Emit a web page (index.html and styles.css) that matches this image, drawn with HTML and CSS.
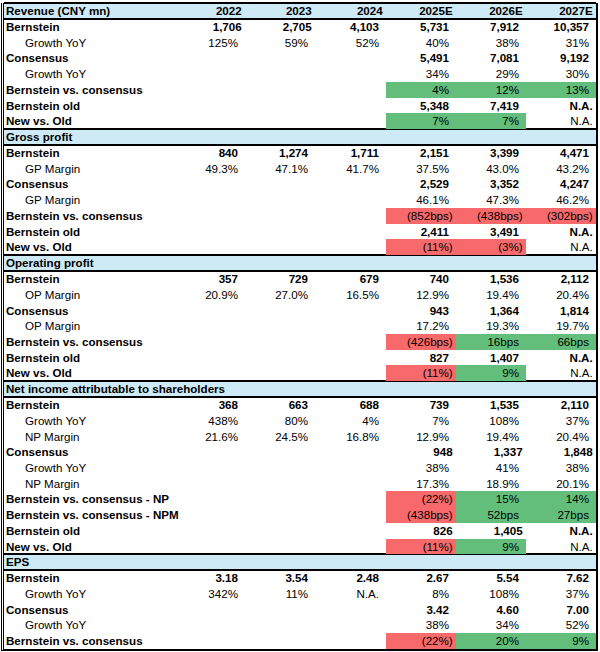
FILE: index.html
```html
<!DOCTYPE html>
<html>
<head>
<meta charset="utf-8">
<link rel="stylesheet" href="styles.css">
</head>
<body>
<div class="sheet">
  <div class="row hd"><div class="lbl b">Revenue (CNY mn)</div><div class="b">2022</div><div class="b">2023</div><div class="b">2024</div><div class="b">2025E</div><div class="b">2026E</div><div class="b">2027E</div></div>
  <div class="row"><div class="lbl b">Bernstein</div><div class="b">1,706</div><div class="b">2,705</div><div class="b p">4,103</div><div class="b p">5,731</div><div class="b p">7,912</div><div class="b p">10,357</div></div>
  <div class="row"><div class="lbl sub">Growth YoY</div><div class="p">125%</div><div class="p">59%</div><div class="p">52%</div><div class="p">40%</div><div class="p">38%</div><div class="p">31%</div></div>
  <div class="row"><div class="lbl b">Consensus</div><div></div><div></div><div></div><div class="b p">5,491</div><div class="b p">7,081</div><div class="b p">9,192</div></div>
  <div class="row"><div class="lbl sub">Growth YoY</div><div></div><div></div><div></div><div class="p">34%</div><div class="p">29%</div><div class="p">30%</div></div>
  <div class="row"><div class="lbl b">Bernstein vs. consensus</div><div></div><div></div><div></div><div class="p g">4%</div><div class="p g">12%</div><div class="p g">13%</div></div>
  <div class="row"><div class="lbl b">Bernstein old</div><div></div><div></div><div></div><div class="b p">5,348</div><div class="b p">7,419</div><div class="b">N.A.</div></div>
  <div class="row"><div class="lbl b">New vs. Old</div><div></div><div></div><div></div><div class="p g">7%</div><div class="p g">7%</div><div>N.A.</div></div>

  <div class="row hd"><div class="lbl b">Gross profit</div><div></div><div></div><div></div><div></div><div></div><div></div></div>
  <div class="row"><div class="lbl b">Bernstein</div><div class="b p">840</div><div class="b p">1,274</div><div class="b p">1,711</div><div class="b p">2,151</div><div class="b p">3,399</div><div class="b p">4,471</div></div>
  <div class="row"><div class="lbl sub">GP Margin</div><div class="p">49.3%</div><div class="p">47.1%</div><div class="p">41.7%</div><div class="p">37.5%</div><div class="p">43.0%</div><div class="p">43.2%</div></div>
  <div class="row"><div class="lbl b">Consensus</div><div></div><div></div><div></div><div class="b p">2,529</div><div class="b p">3,352</div><div class="b p">4,247</div></div>
  <div class="row"><div class="lbl sub">GP Margin</div><div></div><div></div><div></div><div class="p">46.1%</div><div class="p">47.3%</div><div class="p">46.2%</div></div>
  <div class="row"><div class="lbl b">Bernstein vs. consensus</div><div></div><div></div><div></div><div class="r">(852bps)</div><div class="r">(438bps)</div><div class="r">(302bps)</div></div>
  <div class="row"><div class="lbl b">Bernstein old</div><div></div><div></div><div></div><div class="b p">2,411</div><div class="b p">3,491</div><div class="b">N.A.</div></div>
  <div class="row"><div class="lbl b">New vs. Old</div><div></div><div></div><div></div><div class="r">(11%)</div><div class="r">(3%)</div><div>N.A.</div></div>

  <div class="row hd"><div class="lbl b">Operating profit</div><div></div><div></div><div></div><div></div><div></div><div></div></div>
  <div class="row"><div class="lbl b">Bernstein</div><div class="b p">357</div><div class="b p">729</div><div class="b p">679</div><div class="b p">740</div><div class="b p">1,536</div><div class="b p">2,112</div></div>
  <div class="row"><div class="lbl sub">OP Margin</div><div class="p">20.9%</div><div class="p">27.0%</div><div class="p">16.5%</div><div class="p">12.9%</div><div class="p">19.4%</div><div class="p">20.4%</div></div>
  <div class="row"><div class="lbl b">Consensus</div><div></div><div></div><div></div><div class="b p">943</div><div class="b p">1,364</div><div class="b p">1,814</div></div>
  <div class="row"><div class="lbl sub">OP Margin</div><div></div><div></div><div></div><div class="p">17.2%</div><div class="p">19.3%</div><div class="p">19.7%</div></div>
  <div class="row"><div class="lbl b">Bernstein vs. consensus</div><div></div><div></div><div></div><div class="r">(426bps)</div><div class="p g">16bps</div><div class="p g">66bps</div></div>
  <div class="row"><div class="lbl b">Bernstein old</div><div></div><div></div><div></div><div class="b p">827</div><div class="b p">1,407</div><div class="b">N.A.</div></div>
  <div class="row"><div class="lbl b">New vs. Old</div><div></div><div></div><div></div><div class="r">(11%)</div><div class="p g">9%</div><div>N.A.</div></div>

  <div class="row hd"><div class="lbl b">Net income attributable to shareholders</div><div></div><div></div><div></div><div></div><div></div><div></div></div>
  <div class="row"><div class="lbl b">Bernstein</div><div class="b p">368</div><div class="b p">663</div><div class="b p">688</div><div class="b p">739</div><div class="b p">1,535</div><div class="b p">2,110</div></div>
  <div class="row"><div class="lbl sub">Growth YoY</div><div class="p">438%</div><div class="p">80%</div><div class="p">4%</div><div class="p">7%</div><div class="p">108%</div><div class="p">37%</div></div>
  <div class="row"><div class="lbl sub">NP Margin</div><div class="p">21.6%</div><div class="p">24.5%</div><div class="p">16.8%</div><div class="p">12.9%</div><div class="p">19.4%</div><div class="p">20.4%</div></div>
  <div class="row"><div class="lbl b">Consensus</div><div></div><div></div><div></div><div class="b">948</div><div class="b">1,337</div><div class="b">1,848</div></div>
  <div class="row"><div class="lbl sub">Growth YoY</div><div></div><div></div><div></div><div class="p">38%</div><div class="p">41%</div><div class="p">38%</div></div>
  <div class="row"><div class="lbl sub">NP Margin</div><div></div><div></div><div></div><div class="p">17.3%</div><div class="p">18.9%</div><div class="p">20.1%</div></div>
  <div class="row"><div class="lbl b">Bernstein vs. consensus - NP</div><div></div><div></div><div></div><div class="r">(22%)</div><div class="p g">15%</div><div class="p g">14%</div></div>
  <div class="row"><div class="lbl b">Bernstein vs. consensus - NPM</div><div></div><div></div><div></div><div class="r">(438bps)</div><div class="p g">52bps</div><div class="p g">27bps</div></div>
  <div class="row"><div class="lbl b">Bernstein old</div><div></div><div></div><div></div><div class="b">826</div><div class="b">1,405</div><div class="b">N.A.</div></div>
  <div class="row"><div class="lbl b">New vs. Old</div><div></div><div></div><div></div><div class="r">(11%)</div><div class="p g">9%</div><div>N.A.</div></div>

  <div class="row hd"><div class="lbl b">EPS</div><div></div><div></div><div></div><div></div><div></div><div></div></div>
  <div class="row"><div class="lbl b">Bernstein</div><div class="b p">3.18</div><div class="b p">3.54</div><div class="b p">2.48</div><div class="b p">2.67</div><div class="b p">5.54</div><div class="b p">7.62</div></div>
  <div class="row"><div class="lbl sub">Growth YoY</div><div class="p">342%</div><div class="p">11%</div><div class="p">N.A.</div><div class="p">8%</div><div class="p">108%</div><div class="p">37%</div></div>
  <div class="row"><div class="lbl b">Consensus</div><div></div><div></div><div></div><div class="b p">3.42</div><div class="b p">4.60</div><div class="b p">7.00</div></div>
  <div class="row"><div class="lbl sub">Growth YoY</div><div></div><div></div><div></div><div class="p">38%</div><div class="p">34%</div><div class="p">52%</div></div>
  <div class="row"><div class="lbl b">Bernstein vs. consensus</div><div></div><div></div><div></div><div class="r">(22%)</div><div class="p g">20%</div><div class="p g">9%</div></div>
</div>
</body>
</html>
```

FILE: styles.css
```css
html, body {
  margin: 0;
  padding: 0;
  background: #fff;
}

body {
  font-family: "Liberation Sans", Arial, sans-serif;
  font-size: 11.6px;
  color: #000;
}

.sheet {
  margin: 3px 0 0 1px;
  width: 592px;
  border-left: 3px double #000;
  border-right: 2px solid #000;
  border-bottom: 2px solid #000;
}

.row {
  display: grid;
  grid-template-columns: 171px 70px 70px 71px 70px 70px 70px;
  height: 15.72px;
  line-height: 15.72px;
}

.row > div {
  text-align: right;
  padding-right: 3.3px;
  white-space: nowrap;
  overflow: visible;
}

.row > .lbl {
  text-align: left;
  padding-left: 2px;
  padding-right: 0;
}

.row > .sub {
  padding-left: 21px;
}

.row > .p {
  padding-right: 7px;
}

.b {
  font-weight: bold;
}

.g {
  background: #63be7b;
}

.r {
  background: #f8696b;
}

.hd {
  box-sizing: border-box;
  height: 16px;
  line-height: 14px;
  border-top: 1px solid #000;
  border-bottom: 1px solid #000;
  box-shadow: 0 -1px 0 #000, 0 1px 0 #000;
  background: #cfeaf7;
}
```
